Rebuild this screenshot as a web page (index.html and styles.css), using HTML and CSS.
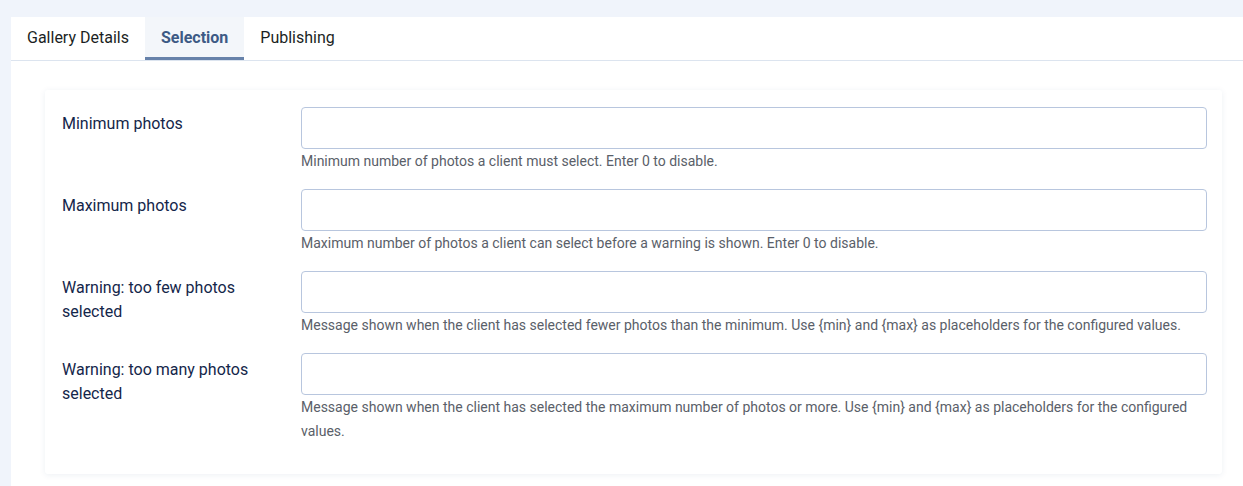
FILE: index.html
```html
<!DOCTYPE html>
<html lang="en">
<head>
<meta charset="utf-8">
<title>Gallery - Selection</title>
<link rel="stylesheet" href="styles.css">
</head>
<body>
<div class="panel">
  <div class="tabs">
    <div class="tab">Gallery Details</div>
    <div class="tab active">Selection</div>
    <div class="tab">Publishing</div>
  </div>
  <div class="tab-body">
    <div class="card">
      <div class="row">
        <label class="label">Minimum photos</label>
        <div class="control">
          <input class="input" type="text">
          <div class="help">Minimum number of photos a client must select. Enter 0 to disable.</div>
        </div>
      </div>
      <div class="row">
        <label class="label">Maximum photos</label>
        <div class="control">
          <input class="input" type="text">
          <div class="help">Maximum number of photos a client can select before a warning is shown. Enter 0 to disable.</div>
        </div>
      </div>
      <div class="row">
        <label class="label">Warning: too few photos selected</label>
        <div class="control">
          <input class="input" type="text">
          <div class="help">Message shown when the client has selected fewer photos than the minimum. Use {min} and {max} as placeholders for the configured values.</div>
        </div>
      </div>
      <div class="row">
        <label class="label">Warning: too many photos selected</label>
        <div class="control">
          <input class="input" type="text">
          <div class="help">Message shown when the client has selected the maximum number of photos or more. Use {min} and {max} as placeholders for the configured values.</div>
        </div>
      </div>
    </div>
  </div>
</div>
</body>
</html>
```

FILE: styles.css
```css
* { box-sizing: border-box; }
html, body { height: 100%; }
body {
  margin: 0;
  background: #f0f4fb;
  font-family: Roboto, "Liberation Sans", Arial, sans-serif;
  color: #22262a;
  padding: 17px 0 0 11px;
  overflow: hidden;
}
.panel {
  background: #fff;
  min-height: 600px;
}
.tabs {
  display: flex;
  border-bottom: 1px solid #dce4ef;
  height: 44px;
}
.tab {
  font-size: 16px;
  line-height: 24px;
  padding: 9px 16px 10px;
  color: #1b1f24;
  border-bottom: 3px solid transparent;
  margin-bottom: -1px;
}
.tab.active {
  background: #f3f6fa;
  color: #3d5a85;
  font-weight: 700;
  border-bottom: 3px solid #6782aa;
  height: 43px;
}
.tab-body {
  padding: 29px 21px 0 34px;
}
.card {
  background: #fff;
  box-shadow: 0 1px 6px rgba(30, 60, 110, 0.08);
  border-radius: 3px;
  padding: 17px 15px 15px 17px;
}
.row {
  display: grid;
  grid-template-columns: 239px 1fr;
  margin-bottom: 16px;
}
.label {
  font-size: 16px;
  line-height: 24px;
  color: #14264a;
  padding-top: 5px;
  padding-right: 30px;
}
.control { min-width: 0; }
.input {
  display: block;
  width: 100%;
  height: 42px;
  border: 1px solid #b8c6de;
  border-radius: 4px;
  background: #fff;
  font: inherit;
  outline: none;
}
.help {
  font-size: 14px;
  line-height: 24px;
  color: #5a6069;
  padding-top: 0;
}
```
